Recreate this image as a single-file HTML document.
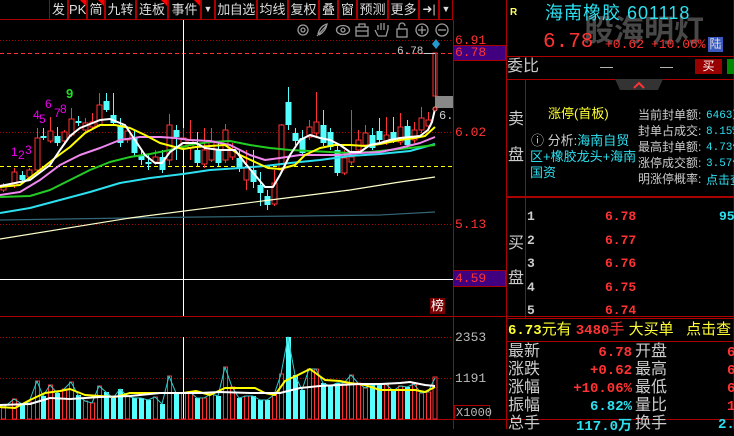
<!DOCTYPE html>
<html><head><meta charset="utf-8"><style>
*{margin:0;padding:0;box-sizing:border-box}
body{width:734px;height:429px;background:#000;overflow:hidden;position:relative;font-family:"Liberation Sans","Noto Sans CJK SC",sans-serif;color:#ccc}
.a{position:absolute;white-space:nowrap;line-height:1}
.tb{position:absolute;top:0;height:20px;border:1px solid #a00;border-top:none;color:#ddd;font-size:13px;text-align:center;line-height:19px;white-space:nowrap;overflow:hidden}
.fl{position:absolute;right:0;top:0;width:0;height:0;border-top:6px solid #f00;border-left:6px solid transparent}
.cn{font-family:"Liberation Sans","Noto Sans CJK SC",sans-serif}
.m{font-family:"Liberation Mono","DejaVu Sans Mono",monospace}
</style></head><body>
<div class="tb" style="left:49px;width:19px">发</div>
<div class="tb" style="left:68px;width:19px">PK<i class="fl"></i></div>
<div class="tb" style="left:87px;width:18px">简<i class="fl"></i></div>
<div class="tb" style="left:105px;width:31px">九转</div>
<div class="tb" style="left:136px;width:32px">连板<i class="fl"></i></div>
<div class="tb" style="left:168px;width:33px">事件<i class="fl"></i></div>
<div class="tb" style="left:201px;width:14px;font-size:9px">▼</div>
<div class="tb" style="left:215px;width:42px;letter-spacing:-0.5px">加自选</div>
<div class="tb" style="left:257px;width:31px">均线</div>
<div class="tb" style="left:288px;width:31px">复权</div>
<div class="tb" style="left:319px;width:19px">叠</div>
<div class="tb" style="left:338px;width:19px">窗</div>
<div class="tb" style="left:357px;width:31px">预测</div>
<div class="tb" style="left:388px;width:31px">更多</div>
<div class="tb" style="left:419px;width:20px;font-size:12px">➜|</div>
<div class="tb" style="left:439px;width:14px;font-size:9px">▼</div>
<svg id="ch" width="734" height="429" style="position:absolute;left:0;top:0"></svg>
<div class="a m" style="left:455px;top:34px;font-size:13px;color:#f33">6.91</div>
<div style="position:absolute;left:453px;top:45px;width:53px;height:16px;background:#400080;border:1px solid #a00"></div>
<div class="a m" style="left:455px;top:46px;font-size:13px;color:#f33">6.78</div>
<div class="a m" style="left:455px;top:126px;font-size:13px;color:#f33">6.02</div>
<div class="a m" style="left:455px;top:218px;font-size:13px;color:#f33">5.13</div>
<div style="position:absolute;left:453px;top:270px;width:53px;height:17px;background:#400080;border:1px solid #a00"></div>
<div class="a m" style="left:455px;top:272px;font-size:13px;color:#f33">4.59</div>
<div class="a m" style="left:455px;top:331px;font-size:13px;color:#bbb">2353</div>
<div class="a m" style="left:455px;top:372px;font-size:13px;color:#bbb">1191</div>
<div class="a m" style="left:454px;top:405px;width:36px;height:15px;border:1px solid #a00;font-size:12px;color:#bbb;padding:1px 0 0 1px">X1000</div>
<div class="a m" style="left:397px;top:47px;font-size:11px;color:#ccc">6.78</div>
<div class="a m" style="left:439px;top:110px;font-size:12px;color:#ccc">6.</div>
<div class="a" style="left:430px;top:298px;width:15px;height:16px;background:#700;color:#fff;font-size:13px;text-align:center;line-height:16px">榜</div>
<div class="a" style="left:11px;top:146px;font-size:12px;color:#e0e">1</div>
<div class="a" style="left:18px;top:149px;font-size:12px;color:#e0e">2</div>
<div class="a" style="left:25px;top:144px;font-size:12px;color:#e0e">3</div>
<div class="a" style="left:33px;top:109px;font-size:12px;color:#e0e">4</div>
<div class="a" style="left:39px;top:113px;font-size:12px;color:#e0e">5</div>
<div class="a" style="left:45px;top:98px;font-size:12px;color:#e0e">6</div>
<div class="a" style="left:54px;top:107px;font-size:12px;color:#e0e">7</div>
<div class="a" style="left:60px;top:103px;font-size:12px;color:#e0e">8</div>
<div class="a" style="left:66px;top:87px;font-size:13px;color:#2d2;font-weight:bold">9</div>
<svg width="160" height="16" style="position:absolute;left:294px;top:22px" fill="none" stroke="#999" stroke-width="1.3">
<circle cx="9" cy="8" r="5"/><circle cx="9" cy="8" r="2"/>
<path d="M23 14 L33 3 M24 12 Q26 4 33 2 Q32 9 25 13"/>
<ellipse cx="49" cy="8" rx="6.5" ry="4.5"/><circle cx="49" cy="8" r="2"/>
<rect x="62" y="5" width="12" height="9"/><path d="M65 5 V2 H71 V5 M62 9 H74"/>
<path d="M84 14 L81 8 M84 14 H92 L94 7 V3 M90 8 V1 M87 8 V1 M84 8 V3"/>
<rect x="103" y="7" width="10" height="8"/><path d="M105 7 V4 A3 3 0 0 1 111 4"/>
<circle cx="128" cy="8" r="6"/><path d="M124 8 H132 M128 4 V12"/>
<circle cx="148" cy="8" r="6"/><path d="M144 8 H152"/>
</svg>
<div class="a" style="left:510px;top:8px;font-size:10px;color:#ff6;font-weight:bold">R</div>
<div class="a cn" style="left:584px;top:17px;font-size:30px;color:#555;font-weight:bold;opacity:.85">股海明灯</div>
<div class="a cn" style="left:545px;top:4px;font-size:18px;color:#2de0f0;letter-spacing:1px">海南橡胶 601118</div>
<div class="a m" style="left:543px;top:32px;font-size:21px;color:#f33">6.78</div>
<div class="a m" style="left:605px;top:38px;font-size:13px;color:#f33">+0.62</div>
<div class="a m" style="left:651px;top:38px;font-size:13px;color:#f33">+10.06%</div>
<div class="a" style="left:708px;top:37px;width:15px;height:15px;background:#3a5ac0;color:#ddd;font-size:12px;text-align:center;line-height:15px">陆</div>
<div class="a" style="left:506px;top:56px;width:228px;height:1px;background:#a00"></div>
<div class="a" style="left:507px;top:59px;font-size:16px;color:#ccc">委比</div>
<div class="a" style="left:600px;top:60px;font-size:13px;color:#ccc">—</div>
<div class="a" style="left:660px;top:60px;font-size:13px;color:#ccc">—</div>
<div class="a" style="left:695px;top:59px;width:27px;height:15px;background:#900;color:#fff;font-size:12px;text-align:center;line-height:15px">买</div>
<div class="a" style="left:727px;top:59px;width:7px;height:15px;background:#080"></div>
<div class="a" style="left:506px;top:79px;width:228px;height:1px;background:#a00"></div>
<svg width="50" height="12" style="position:absolute;left:615px;top:79px"><path d="M0 0 H48 L43 11 H5 Z" fill="#333"/><path d="M19 9 L24 4 L29 9" stroke="#f33" stroke-width="2" fill="none"/></svg>
<div class="a" style="left:525px;top:80px;width:1px;height:116px;background:#a00"></div>
<div class="a" style="left:508px;top:112px;font-size:16px;color:#ccc">卖</div>
<div class="a" style="left:508px;top:148px;font-size:16px;color:#ccc">盘</div>
<div class="a" style="left:548px;top:107px;font-size:13px;color:#ff3">涨停(首板)</div>
<div class="a" style="left:531px;top:134px;font-size:13px;color:#ccc">ⓘ 分析:<span style="color:#2de0f0">海南自贸</span></div>
<div class="a" style="left:530px;top:150px;font-size:13px;color:#2de0f0">区+橡胶龙头+海南</div>
<div class="a" style="left:530px;top:166px;font-size:13px;color:#2de0f0">国资</div>
<div class="a" style="left:638px;top:107px;font-size:12px;color:#ccc;line-height:16px">当前封单额:<br>封单占成交:<br>最高封单额:<br>涨停成交额:<br>明涨停概率:</div>
<div class="a m" style="left:706px;top:108px;font-size:11px;color:#2de0f0;line-height:16px">6463万<br>8.15%<br>4.73亿<br>3.57亿<br><span class="cn" style="font-size:12px">点击查</span></div>
<div class="a" style="left:506px;top:196px;width:228px;height:2px;background:#a00"></div>
<div class="a" style="left:525px;top:198px;width:1px;height:120px;background:#a00"></div>
<div class="a" style="left:508px;top:236px;font-size:16px;color:#ccc">买</div>
<div class="a" style="left:508px;top:271px;font-size:16px;color:#ccc">盘</div>
<div class="a m" style="left:527px;top:205px;font-size:13px;color:#ccc;line-height:23.5px;font-weight:bold">1<br>2<br>3<br>4<br>5</div>
<div class="a m" style="left:605px;top:205px;font-size:13px;color:#f33;line-height:23.5px;font-weight:bold">6.78<br>6.77<br>6.76<br>6.75<br>6.74</div>
<div class="a m" style="left:719px;top:205px;font-size:13px;color:#2de0f0;line-height:23.5px;font-weight:bold">95<br>&nbsp;&nbsp;4<br>&nbsp;&nbsp;1<br>&nbsp;&nbsp;2<br>&nbsp;</div>
<div class="a" style="left:506px;top:318px;width:228px;height:1px;background:#a00"></div>
<div class="a" style="left:508px;top:322px;font-size:15px;color:#ff3"><b class="m" style="font-size:14px">6.73</b>元有 <span style="color:#f33"><b class="m" style="font-size:14px">3480</b>手</span> 大买单 &nbsp;&nbsp;点击查</div>
<div class="a" style="left:506px;top:341px;width:228px;height:1px;background:#a00"></div>
<div class="a" style="left:508px;top:343px;font-size:16px;color:#ccc;line-height:18px">最新<br>涨跌<br>涨幅<br>振幅<br>总手</div>
<div class="a" style="left:635px;top:343px;font-size:16px;color:#ccc;line-height:18px">开盘<br>最高<br>最低<br>量比<br>换手</div>
<div class="a m" style="left:560px;top:344px;width:72px;text-align:right;font-size:14px;color:#f33;line-height:18px;font-weight:bold">6.78<br>+0.62<br>+10.06%<br><span style="color:#2de0f0">6.82%</span><br><span style="color:#2de0f0">117.0<span class="cn">万</span></span></div>
<div class="a m" style="left:727px;top:344px;font-size:14px;color:#f33;line-height:18px;font-weight:bold">6<br>6<br>6<br>1<br><span style="color:#2de0f0;margin-left:-9px">2.7</span></div>
<script>
var s=document.getElementById('ch'),h='';
function L(x1,y1,x2,y2,c,w,d){h+='<line x1="'+x1+'" y1="'+y1+'" x2="'+x2+'" y2="'+y2+'" stroke="'+c+'" stroke-width="'+(w||1)+'"'+(d?' stroke-dasharray="'+d+'"':'')+'/>';}
function P(pts,c,w){h+='<polyline fill="none" stroke="'+c+'" stroke-width="'+w+'" stroke-linejoin="round" points="'+pts.map(function(p){return p.join(',')}).join(' ')+'"/>';}
L(0,19.5,453,19.5,'#a00');L(0,316.5,734,316.5,'#a00');L(0,419.5,734,419.5,'#a00');
L(453.5,20,453.5,429,'#a00');L(506.5,0,506.5,429,'#a00');L(734,0,734,429,'#a00');
L(0,40.5,453,40.5,'#a00',1,'1,2');L(0,132.5,453,132.5,'#a00',1,'1,2');L(0,224.5,453,224.5,'#a00',1,'1,2');
L(0,337.5,453,337.5,'#a00',1,'1,2');L(0,378.5,453,378.5,'#a00',1,'1,2');
L(0,53.5,453,53.5,'#f33',1,'4,3');L(0,166.5,453,166.5,'#ff0',1,'4,3');
L(0,279.5,453,279.5,'#fff',1);L(183.5,20,183.5,316,'#fff');L(183.5,337,183.5,419,'#fff');
var C=[[3,185,190,183,192,'r'],[14,172,185,168,188,'r'],[22,175,180,171,183,'c'],[29,170,177,168,180,'r'],[37,138,170,128,172,'r'],[43,136,138,128,140,'c'],[50,131,141,117,143,'r'],[57,136,143,127,146,'c'],[64,132,141,130,143,'r'],[71,119,135,108,137,'r'],[78,121,123,116,126,'c'],[85,123,130,118,132,'r'],[92,122,127,113,130,'r'],[99,105,125,93,127,'r'],[106,101,110,93,112,'c'],[113,115,123,93,125,'c'],[120,125,143,118,147,'c'],[127,131,140,126,143,'r'],[134,138,153,130,156,'c'],[141,155,160,150,165,'c'],[148,162,164,155,170,'c'],[155,157,162,150,165,'r'],[162,157,170,150,173,'c'],[169,125,160,114,165,'r'],[176,130,137,125,160,'c'],[183,138,146,128,150,'r'],[190,140,148,120,160,'r'],[197,150,163,132,166,'c'],[204,150,164,128,168,'r'],[211,141,160,128,162,'r'],[218,150,163,143,166,'c'],[225,130,160,124,163,'r'],[232,150,157,143,160,'r'],[239,158,168,150,172,'c'],[246,168,180,150,190,'r'],[253,170,182,150,188,'c'],[260,185,193,172,206,'c'],[267,196,205,190,210,'c'],[274,183,204,170,206,'r'],[281,125,170,124,172,'r'],[288,102,125,87,130,'c'],[295,133,141,128,145,'c'],[302,138,153,130,156,'c'],[309,127,137,120,140,'r'],[316,122,133,92,136,'r'],[323,125,143,110,146,'c'],[330,132,147,128,150,'c'],[337,150,173,145,176,'c'],[344,158,173,150,175,'r'],[351,157,162,110,165,'r'],[358,140,150,130,153,'r'],[365,133,145,125,148,'r'],[372,135,148,128,150,'c'],[379,131,140,118,143,'c'],[386,135,142,117,145,'r'],[393,132,140,117,143,'c'],[400,127,142,113,145,'r'],[407,126,145,120,148,'c'],[414,130,140,122,143,'r'],[421,118,130,107,133,'r'],[428,120,126,112,130,'r']];
var V=[408,399,404,402,381,396,385,393,389,382,395,401,403,386,392,398,389,396,398,398,400,397,404,376,393,393,392,398,398,394,396,367,387,398,396,396,400,400,395,374,337,375,390,369,369,383,386,383,383,375,383,388,385,385,384,391,386,387,384,393,392];
C.forEach(function(c,i){var col=c[5]=='r'?'#f33':'#5ff';
L(c[0]+.5,c[3],c[0]+.5,c[4],col);
if(c[5]=='r')h+='<rect x="'+(c[0]-2)+'" y="'+c[1]+'" width="5" height="'+(c[2]-c[1])+'" fill="#000" stroke="#f33"/>';
else h+='<rect x="'+(c[0]-2.5)+'" y="'+c[1]+'" width="6" height="'+(c[2]-c[1])+'" fill="#5ff"/>';
var v=V[i];
if(c[5]=='r')h+='<rect x="'+(c[0]-1.5)+'" y="'+v+'" width="4" height="'+(419-v)+'" fill="none" stroke="#f33"/>';
else h+='<rect x="'+(c[0]-2)+'" y="'+v+'" width="5" height="'+(419-v)+'" fill="#5ff"/>';
});
h+='<rect x="433" y="53" width="4" height="43" fill="#000" stroke="#f33"/>';L(435.5,53,435.5,96,'#f33');
h+='<rect x="433" y="377" width="4" height="42" fill="none" stroke="#f33"/>';
h+='<rect x="435" y="96" width="18" height="12" fill="#888"/>';
h+='<path d="M436 39 L440 44 L436 49 L432 44Z" fill="#29c"/>';L(424,53.5,435,53.5,'#ccc');
P(C.map(function(c,i){return [c[0],V[i]]}).concat([[435,378]]),'#3cc',1);
P([[0,220],[130,218],[200,217],[300,216],[380,215],[435,212]],'#367',1.2);
P([[0,239],[130,218],[270,200],[350,190],[400,182],[435,177]],'#ffc',1.2);
P([[0,213],[30,208],[60,200],[90,192],[120,183],[150,178],[183,174],[210,170],[240,168],[265,166],[290,163],[320,160],[350,156],[380,154],[410,151],[435,144]],'#2de0f0',2);
P([[0,197],[30,196],[50,190],[70,180],[90,170],[110,162],[130,157],[150,154],[170,150],[190,145],[210,142],[230,141],[250,145],[270,148],[290,150],[310,151],[330,152],[350,153],[370,152],[390,150],[410,148],[435,145]],'#2c2',2);
P([[0,195],[20,192],[40,180],[60,165],[80,155],[100,148],[120,140],[140,137],[160,137],[175,138],[190,140],[210,141],[230,145],[250,155],[265,160],[280,158],[300,155],[320,155],[340,155],[360,153],[380,152],[400,148],[420,143],[435,137]],'#e8e',2);
P([[0,187],[20,185],[40,170],[55,158],[70,147],[85,133],[100,125],[115,125],[130,128],[145,135],[160,143],[175,147],[183,149],[196,147],[210,146],[225,145],[240,155],[255,162],[268,168],[280,169],[295,165],[305,155],[320,148],[335,145],[350,145],[365,146],[380,144],[400,140],[415,138],[425,136],[435,127]],'#ff0',2);
P([[0,186],[30,180],[50,165],[60,150],[70,136],[80,128],[100,120],[110,119],[125,125],[135,140],[145,155],[155,163],[162,163],[170,152],[183,143],[196,143],[205,148],[220,150],[235,150],[245,163],[255,175],[265,187],[273,187],[280,175],[290,155],[300,140],[310,135],[320,138],[330,140],[340,145],[350,152],[360,152],[370,145],[380,143],[390,140],[400,138],[410,137],[420,136],[428,130],[432,122],[435,109]],'#fff',2);
h+='<circle cx="435" cy="109" r="2" fill="#600" stroke="#f88"/>';
P([[0,407],[15,408],[30,400],[45,393],[60,391],[70,389],[85,395],[100,396],[115,397],[130,393],[145,393],[160,393],[175,393],[183,393],[196,391],[210,395],[225,388],[240,388],[255,388],[265,393],[275,395],[285,381],[298,375],[310,369],[325,380],[340,381],[350,383],[365,385],[380,390],[400,390],[415,390],[425,392],[435,387]],'#ff0',2);
P([[0,405],[30,404],[50,398],[70,399],[100,397],[130,396],[160,393],[183,393],[200,393],[220,392],[250,393],[280,393],[300,388],[320,386],[340,385],[360,384],[380,384],[400,383],[410,382],[425,385],[435,386]],'#fff',2);
s.innerHTML=h;
</script>
</body></html>
